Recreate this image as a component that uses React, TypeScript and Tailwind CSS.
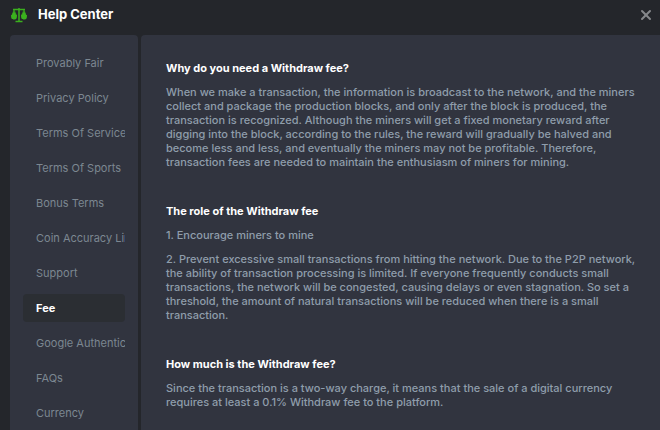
import { FC } from "react";
import { X } from "lucide-react";

const menu = [
  "Provably Fair",
  "Privacy Policy",
  "Terms Of Service",
  "Terms Of Sports",
  "Bonus Terms",
  "Coin Accuracy Limit",
  "Support",
  "Fee",
  "Google Authenticator",
  "FAQs",
  "Currency",
];

const sections = [
  {
    title: "Why do you need a Withdraw fee?",
    text: [
      "When we make a transaction, the information is broadcast to the network, and the miners collect and package the production blocks, and only after the block is produced, the transaction is recognized. Although the miners will get a fixed monetary reward after digging into the block, according to the rules, the reward will gradually be halved and become less and less, and eventually the miners may not be profitable. Therefore, transaction fees are needed to maintain the enthusiasm of miners for mining.",
    ],
  },
  {
    title: "The role of the Withdraw fee",
    text: [
      "1. Encourage miners to mine",
      "2. Prevent excessive small transactions from hitting the network. Due to the P2P network, the ability of transaction processing is limited. If everyone frequently conducts small transactions, the network will be congested, causing delays or even stagnation. So set a threshold, the amount of natural transactions will be reduced when there is a small transaction.",
    ],
  },
  {
    title: "How much is the Withdraw fee?",
    text: [
      "Since the transaction is a two-way charge, it means that the sale of a digital currency requires at least a 0.1% Withdraw fee to the platform.",
    ],
  },
];

const ScalesIcon: FC = () => (
  <svg viewBox="0 0 32 32" className="size-4" aria-hidden="true">
    <g fill="none" stroke="#3bb01e" strokeWidth="3">
      <path d="M4 5h24M16 2v26M9 29h14" />
      <path d="M6 6 2 17M6 6l5 11M26 6l-5 11M26 6l4 11" strokeWidth="1.5" />
    </g>
    <path
      d="M0 16h12c0 8-2 9-6 9s-6-1-6-9zM20 16h12c0 8-2 9-6 9s-6-1-6-9zM6 8l5 9H1zM26 8l5 9H21z"
      fill="#3bb01e"
    />
  </svg>
);

const App: FC = () => {
  return (
    <div className="flex h-screen flex-col overflow-hidden bg-[#24262b] font-['Inter',sans-serif]">
      <header className="flex h-[35px] shrink-0 items-center pr-1.5 pb-1.5 pl-[11px]">
        <ScalesIcon />
        <h1 className="ml-[11px] flex-1 text-[13px] font-bold text-white">Help Center</h1>
        <button type="button" aria-label="Close" className="text-[#85878b]">
          <X size={16} strokeWidth={3} />
        </button>
      </header>
      <div className="flex min-h-0 flex-1 pl-2.5">
        <nav className="mr-[3px] flex w-32 shrink-0 flex-col gap-[7px] overflow-hidden rounded-t bg-[#31343f] px-[13px] pt-3.5">
          {menu.map((item) => (
            <a
              key={item}
              href="#"
              className={
                item === "Fee"
                  ? "h-7 shrink-0 overflow-hidden rounded bg-[#2b2e33] pl-[13px] text-[11px] leading-7 font-bold whitespace-nowrap text-white"
                  : "h-7 shrink-0 overflow-hidden pl-[13px] text-[11px] leading-7 whitespace-nowrap text-[#7c8791]"
              }
            >
              {item}
            </a>
          ))}
        </nav>
        <main className="flex flex-1 flex-col gap-[35px] overflow-hidden rounded-tl bg-[#31343f] pt-[26px] pr-4 pl-[25px] text-[11px] leading-[14px]">
          {sections.map((section) => (
            <section key={section.title} className="flex flex-col gap-2.5">
              <h2 className="font-bold text-white">{section.title}</h2>
              {section.text.map((line) => (
                <p key={line} className="font-medium text-[#8f9dab]">
                  {line}
                </p>
              ))}
            </section>
          ))}
        </main>
      </div>
    </div>
  );
};

export default App;
